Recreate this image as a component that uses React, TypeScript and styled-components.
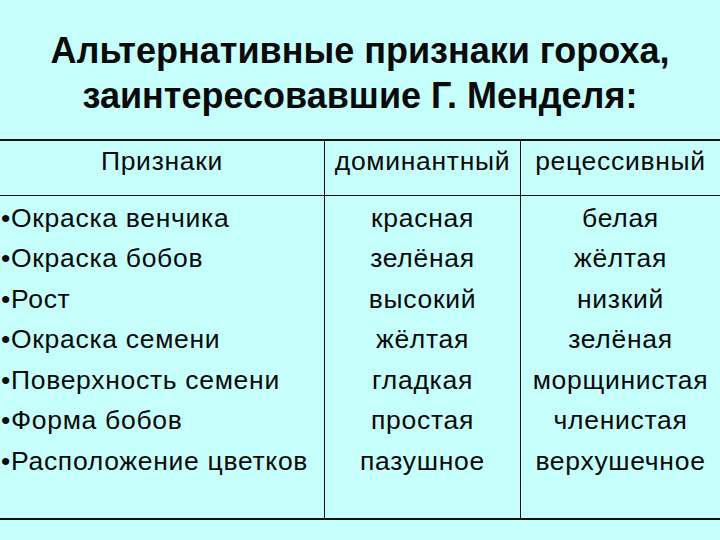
import React from "react";
import styled, { createGlobalStyle } from "styled-components";

const Global = createGlobalStyle`
  html, body {
    margin: 0;
    padding: 0;
    background: #c6fefc;
  }
  body {
    width: 720px;
    height: 540px;
    overflow: hidden;
    font-family: "Liberation Sans", Arial, sans-serif;
    color: #0a0a0a;
  }
`;

const Slide = styled.div`
  width: 720px;
  height: 540px;
  display: flex;
  flex-direction: column;
  background: #c6fefc;
`;

const Title = styled.h1`
  margin: 28px 0 0;
  font-size: 36px;
  line-height: 45px;
  font-weight: bold;
  text-align: center;
  color: #0a0a0a;
`;

const Table = styled.div`
  margin-top: 21px;
  display: grid;
  grid-template-columns: 324px 196px 1fr;
  border-top: 2px solid #111;
  border-bottom: 2px solid #111;
`;

const Cell = styled.div<{ $head?: boolean; $left?: boolean; $sep?: boolean }>`
  font-size: 26.5px;
  letter-spacing: 0.7px;
  line-height: ${(p) => (p.$head ? "30px" : "40.5px")};
  padding: ${(p) => (p.$head ? "5px 0 19px" : "1.5px 0 36.5px")};
  text-align: ${(p) => (p.$left ? "left" : "center")};
  padding-left: ${(p) => (p.$left ? "1px" : "0")};
  border-left: ${(p) => (p.$sep ? "1px solid #111" : "none")};
  border-bottom: ${(p) => (p.$head ? "1px solid #111" : "none")};
  white-space: nowrap;
`;

const Line = styled.div``;

const traits = [
  "•Окраска венчика",
  "•Окраска бобов",
  "•Рост",
  "•Окраска семени",
  "•Поверхность семени",
  "•Форма бобов",
  "•Расположение цветков",
];
const dominant = ["красная", "зелёная", "высокий", "жёлтая", "гладкая", "простая", "пазушное"];
const recessive = ["белая", "жёлтая", "низкий", "зелёная", "морщинистая", "членистая", "верхушечное"];

export default function App() {
  return (
    <>
      <Global />
      <Slide>
        <Title>
          Альтернативные признаки гороха,
          <br />
          заинтересовавшие Г. Менделя:
        </Title>
        <Table>
          <Cell $head>Признаки</Cell>
          <Cell $head $sep>доминантный</Cell>
          <Cell $head $sep>рецессивный</Cell>
          <Cell $left>
            {traits.map((t) => (
              <Line key={t}>{t}</Line>
            ))}
          </Cell>
          <Cell $sep>
            {dominant.map((t) => (
              <Line key={t}>{t}</Line>
            ))}
          </Cell>
          <Cell $sep>
            {recessive.map((t) => (
              <Line key={t}>{t}</Line>
            ))}
          </Cell>
        </Table>
      </Slide>
    </>
  );
}
